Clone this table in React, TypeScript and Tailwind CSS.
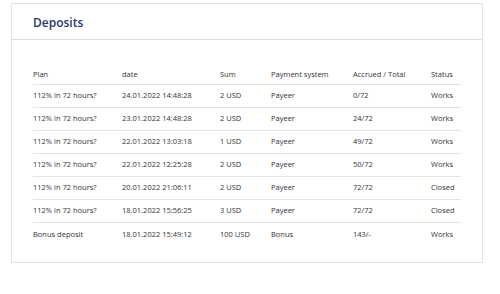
const rows = [
  { plan: '112% in 72 hours?', date: '24.01.2022 14:48:28', sum: '2 USD', system: 'Payeer', accrued: '0/72', status: 'Works' },
  { plan: '112% in 72 hours?', date: '23.01.2022 14:48:28', sum: '2 USD', system: 'Payeer', accrued: '24/72', status: 'Works' },
  { plan: '112% in 72 hours?', date: '22.01.2022 13:03:18', sum: '1 USD', system: 'Payeer', accrued: '49/72', status: 'Works' },
  { plan: '112% in 72 hours?', date: '22.01.2022 12:25:28', sum: '2 USD', system: 'Payeer', accrued: '50/72', status: 'Works' },
  { plan: '112% in 72 hours?', date: '20.01.2022 21:06:11', sum: '2 USD', system: 'Payeer', accrued: '72/72', status: 'Closed' },
  { plan: '112% in 72 hours?', date: '18.01.2022 15:56:25', sum: '3 USD', system: 'Payeer', accrued: '72/72', status: 'Closed' },
  { plan: 'Bonus deposit', date: '18.01.2022 15:49:12', sum: '100 USD', system: 'Bonus', accrued: '143/-', status: 'Works' },
];

const cols = 'grid grid-cols-[89px_98px_51px_82px_78px_30px]';

export default function App() {
  return (
    <div className="w-[500px] h-[294px] bg-white pt-[3px] pl-[11px] font-['Open_Sans',sans-serif] text-[#333]">
      <div className="w-[472px] h-[260px] border border-[#dfe4ea] bg-white">
        <div className="h-[36px] border-b border-[#d6dfe8] pl-[21px] pt-[3px] flex items-center">
          <h2 className="text-[12px] font-semibold text-[#27386b] leading-none">Deposits</h2>
        </div>
        <div className="pl-[21px] pt-[24px]">
          <div className="w-[428px] text-[7.5px]">
            <div className={`${cols} h-[21px] items-center pt-[2px] border-b border-[#e3e3e3]`}>
              <span>Plan</span>
              <span>date</span>
              <span>Sum</span>
              <span>Payment system</span>
              <span>Accrued / Total</span>
              <span>Status</span>
            </div>
            {rows.map((r, i) => (
              <div
                key={i}
                className={`${cols} h-[23px] items-center ${i < rows.length - 1 ? 'border-b border-[#e3e3e3]' : ''}`}
              >
                <span>{r.plan}</span>
                <span>{r.date}</span>
                <span>{r.sum}</span>
                <span>{r.system}</span>
                <span>{r.accrued}</span>
                <span>{r.status}</span>
              </div>
            ))}
          </div>
        </div>
      </div>
    </div>
  );
}
